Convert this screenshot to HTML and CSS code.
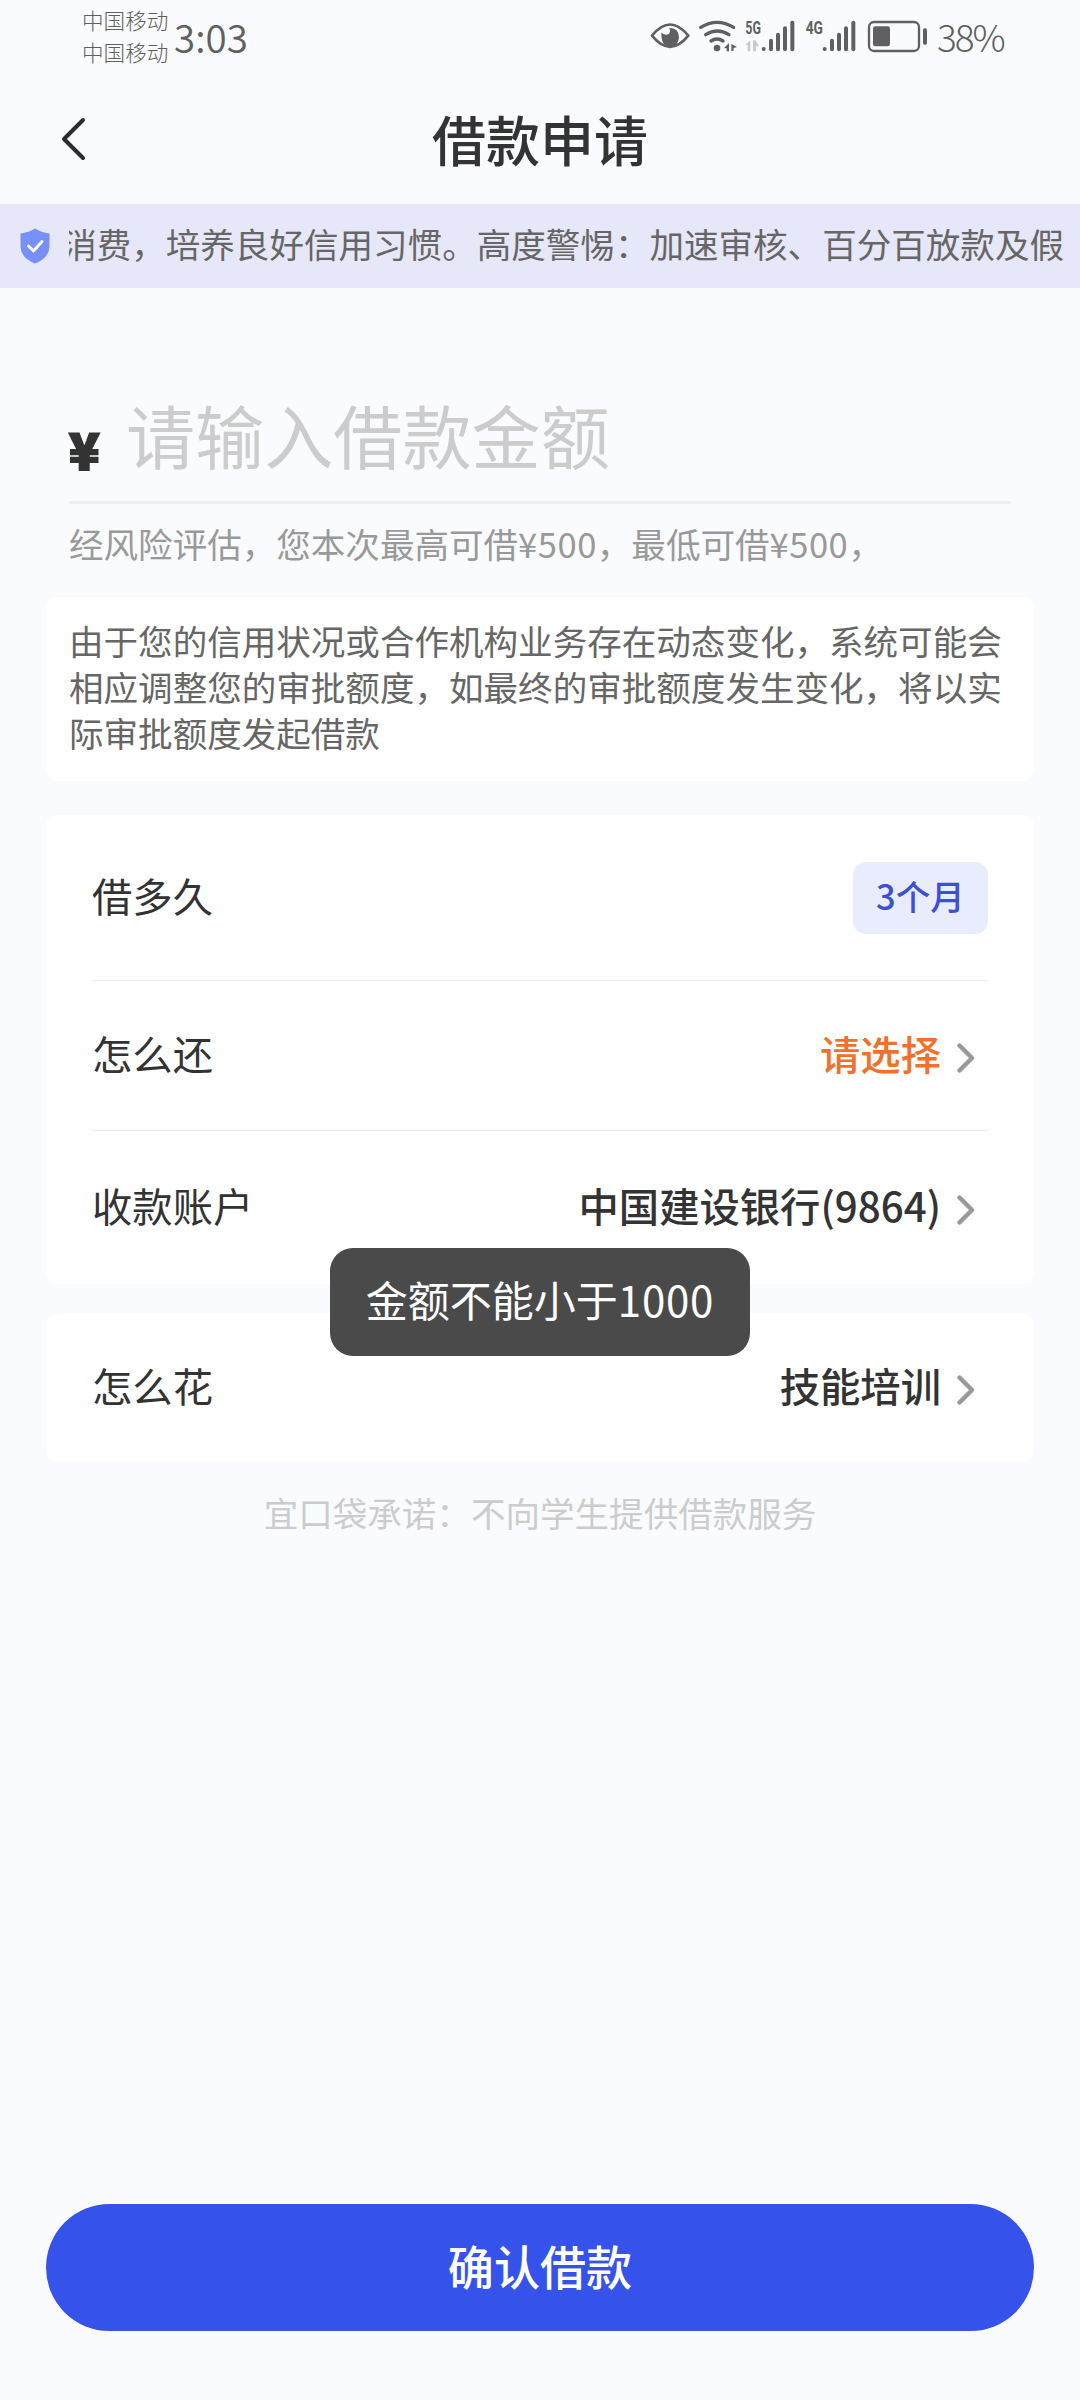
FILE: index.html
```html
<!DOCTYPE html>
<html lang="zh-CN">
<head>
<meta charset="utf-8">
<title>借款申请</title>
<link rel="stylesheet" href="styles.css">
</head>
<body>
<div class="screen">
  <header class="status">
    <div class="carriers"><span>中国移动</span><span>中国移动</span></div>
    <span class="clock">3:03</span>
    <svg class="status-icons" viewBox="0 0 840 240" width="280" height="80" fill="#606060">
      <path d="M36 107Q90 40 145 107Q90 174 36 107Z" fill="none" stroke="#606060" stroke-width="8" stroke-linejoin="round"/>
      <path d="M64 98q14 10 22 4q8-8 1-18q30 0 30 28q-2 29-28 29q-26-3-25-43z"/>
      <g fill="none" stroke="#606060" stroke-width="10" stroke-linecap="round">
        <path d="M182 82q49-30 99 0M197 104q35-22 70 0M213 123q18-12 36 0"/>
      </g>
      <circle cx="231" cy="144" r="10"/>
      <path d="M252 144l15-15v25h-7v-9zM274 132l17 9-10 3-1 9h-6z"/>
      <text class="net" x="316" y="102" textLength="47" lengthAdjust="spacingAndGlyphs">5G</text>
      <path fill="#c9cacd" d="M316 135l15-14v33h-8v-18zM339 121h7l11 18h-9v15h-9z"/>
      <g fill="none" stroke="#606060" stroke-width="12" stroke-linecap="round">
        <path d="M371 147h.1M393 122v26M414 104v44M435 85v63M457 68v80"/>
        <path d="M554 147h.1M576 122v26M597 104v44M618 85v63M640 68v80"/>
      </g>
      <text class="net" x="497" y="102" textLength="52" lengthAdjust="spacingAndGlyphs">4G</text>
      <rect x="687" y="66" width="150" height="87" rx="15" fill="none" stroke="#606060" stroke-width="7"/>
      <rect x="699" y="79" width="51" height="60" rx="7"/>
      <rect x="849" y="85" width="12" height="49" rx="5"/>
    </svg>
    <span class="battery">38%</span>
  </header>

  <nav class="navbar">
    <svg class="back" viewBox="0 0 28 44" width="28" height="44"><path d="M24 3L5 22L24 41" fill="none" stroke="#2b2b2b" stroke-width="4" stroke-linecap="round" stroke-linejoin="round"/></svg>
    <h1 class="title">借款申请</h1>
  </nav>

  <div class="notice">
    <svg class="shield" viewBox="0 0 30 36" width="30" height="36"><path d="M15 0.5Q21 4.5 29.5 5.5V19Q29 30 15 35.5Q1 30 .5 19V5.5Q9 4.5 15 .5Z" fill="#7790f8"/><path d="M8.5 18L13.5 23L22 13.5" fill="none" stroke="#fff" stroke-width="2.8" stroke-linecap="round" stroke-linejoin="round"/></svg>
    <div class="marquee"><span>消费，培养良好信用习惯。高度警惕：加速审核、百分百放款及假</span></div>
  </div>

  <main class="content">
    <section class="amount">
      <div class="amount-input"><span class="yen">¥</span><span class="placeholder">请输入借款金额</span></div>
      <p class="hint">经风险评估，您本次最高可借<span class="sum">¥500</span>，最低可借<span class="sum">¥500</span>，</p>
    </section>

    <p class="card note">由于您的信用状况或合作机构业务存在动态变化，系统可能会相应调整您的审批额度，如最终的审批额度发生变化，将以实际审批额度发起借款</p>

    <section class="card form">
      <div class="row row-term"><span class="label">借多久</span><span class="tag">3个月</span></div>
      <div class="row row-repay"><span class="label">怎么还</span><span class="value prompt">请选择</span><svg class="arrow" viewBox="0 0 18 30" width="18" height="30"><path d="M2.5 2.5L15 15L2.5 27.5"/></svg></div>
      <div class="row row-account"><span class="label">收款账户</span><span class="value">中国建设银行(9864)</span><svg class="arrow" viewBox="0 0 18 30" width="18" height="30"><path d="M2.5 2.5L15 15L2.5 27.5"/></svg></div>
    </section>

    <section class="card usage">
      <div class="row row-usage"><span class="label">怎么花</span><span class="value">技能培训</span><svg class="arrow" viewBox="0 0 18 30" width="18" height="30"><path d="M2.5 2.5L15 15L2.5 27.5"/></svg></div>
    </section>

    <p class="promise">宜口袋承诺：不向学生提供借款服务</p>
  </main>

  <button class="confirm">确认借款</button>
  <div class="toast">金额不能小于<span class="limit">1000</span></div>
</div>
</body>
</html>
```
FILE: styles.css
```css
* { box-sizing: border-box; margin: 0; padding: 0; }

body {
  background: #fafbff;
  color: #333;
  font-family: "Noto Sans CJK SC", sans-serif;
}

.screen {
  position: relative;
  display: flex;
  flex-direction: column;
  width: 1080px;
  height: 2400px;
  padding-bottom: 69px;
  overflow: hidden;
}

.status {
  display: flex;
  align-items: flex-start;
  height: 80px;
  padding-left: 82px;
  color: #606060;
}

.carriers {
  display: flex;
  flex-direction: column;
  width: 92px;
  padding-top: 4px;
  font-size: 21.6px;
  font-weight: 300;
  line-height: 32px;
}

.clock { width: 466px; padding-top: 8px; font-size: 38.5px; font-weight: 350; line-height: 56px; }
.status-icons { flex: none; overflow: visible; }
.net { font: 700 54px "Roboto", sans-serif; }
.battery { padding: 8px 0 0 17px; font-size: 37px; font-weight: 300; letter-spacing: -2px; line-height: 56px; }

.navbar {
  display: grid;
  grid-template-columns: 87px 1fr 87px;
  align-items: center;
  height: 124px;
}

.back { justify-self: end; margin-bottom: 6px; }
.title { padding-bottom: 7px; font-size: 54px; font-weight: 500; line-height: 80px; text-align: center; }

.notice {
  display: flex;
  align-items: center;
  height: 84px;
  padding: 0 16px 0 20px;
  background: #e6e7f9;
  color: #666;
}

.shield { flex: none; margin-right: 19px; }

.marquee {
  display: flex;
  flex: 1;
  justify-content: flex-end;
  overflow: hidden;
  padding-bottom: 6px;
  font-size: 34.56px;
  line-height: 60px;
  white-space: nowrap;
}

.content { flex: 1; padding: 0 46px; }

.amount { height: 309px; padding: 96px 23px 0; }

.amount-input {
  display: flex;
  gap: 26px;
  height: 120px;
  border-bottom: 3px solid #eeeff2;
}

.yen { width: 31px; padding-top: 14px; font-size: 50px; font-weight: 900; line-height: 100px; -webkit-text-stroke: 2.2px #333; }
.placeholder { color: #ccc; font-size: 69.12px; line-height: 100px; }
.hint { padding-top: 14px; color: #999; font-size: 34.56px; line-height: 50px; white-space: nowrap; }
.sum { letter-spacing: 0.5px; }

.card { border-radius: 12px; background: #fff; }

.note {
  height: 184px;
  padding: 20px 23px;
  color: #666;
  font-size: 34.56px;
  line-height: 46px;
}

.form { height: 469px; margin-top: 34px; padding: 0 46px; }
.usage { height: 149px; margin-top: 29px; padding: 0 46px; }

.row { display: flex; align-items: center; font-size: 40.32px; line-height: 58px; }
.row + .row { border-top: 1px solid #ebebeb; }
.row-term { height: 165px; }
.row-repay { height: 150px; }
.row-account { height: 154px; }
.row-usage { height: 149px; }

.label { flex: 1; padding-bottom: 5px; }
.value { padding-bottom: 5px; font-weight: 500; }
.prompt { color: #f0712c; }
.arrow { margin: 4px 13px 0 16px; fill: none; stroke: #999; stroke-width: 4.4; stroke-linecap: round; stroke-linejoin: round; }

.tag {
  width: 135px;
  height: 72px;
  padding: 7px 0 0 23px;
  border-radius: 13px;
  background: #e9ecfd;
  color: #3b50d2;
  font-size: 34.56px;
  font-weight: 500;
  line-height: 52px;
}

.promise { padding-top: 25px; color: #ccc; font-size: 34.56px; line-height: 50px; text-align: center; }

.confirm {
  height: 127px;
  margin: 0 46px;
  padding-bottom: 6px;
  border: 0;
  border-radius: 64px;
  background: #3552ea;
  color: #fff;
  font: 500 46.08px "Noto Sans CJK SC", sans-serif;
}

/* Floats above the form cards. */
.toast {
  position: absolute;
  top: 1248px;
  left: 330px;
  width: 420px;
  height: 108px;
  border-radius: 23px;
  background: #4a4a4a;
  color: #fff;
  font-size: 42px;
  line-height: 101px;
  text-align: center;
}

.limit { letter-spacing: 0.8px; }
```
